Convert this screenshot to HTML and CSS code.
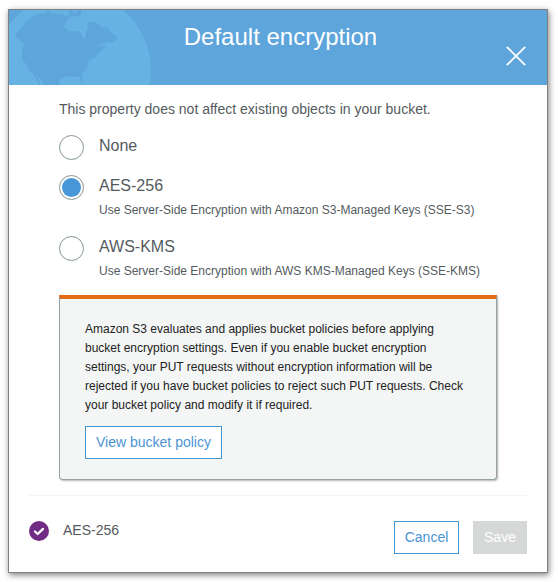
FILE: index.html
```
<!DOCTYPE html>
<html lang="en">
<head>
<meta charset="utf-8">
<title>Default encryption</title>
<link rel="stylesheet" href="styles.css">
</head>
<body>
<section class="modal">
  <header class="header">
    <svg class="globe" width="144" height="75" viewBox="9 10 144 75" aria-hidden="true">
      <circle cx="73" cy="70" r="78" fill="#65b2e3"/>
      <path fill="#5ea5db" d="M40 13 L32 17 L25 23 L20 29 L15 35 L17 38 L22 42 L25 45 L24 47 L22 46 L22 59 L26 64 L29 71 L34 75 L39 85 L40.500 85 L36 74 L41 80 L44 85 L59 85 L60 79 L68 76 L73 77 L80 77 L82 83 L83 83 L83 78 L81 74 L87 69 L89 60 L96 57 L98 53 L102 50 L105 48 L105 45 L98 47 L101 43 L109 42 L111 43 L117 39 L115 35 L110 32 L107 27 L101 28 L97 23 L92 22 L87 22 L88 29 L86 31 L86 36 L84 40 L82 37 L81 33 L77 31 L68 31 L64 27 L66 21 L71 17 L78 16 L81 15 L81 10 L78 10 L75 13 L72 10 L67 11 L71 14 L66 16 L62 15 L61 12 L60 15 L55 13 L51 14 L50 11 L46 12 L44 14Z"/>
    </svg>
    <h1>Default encryption</h1>
    <svg class="close" width="20" height="20" viewBox="0 0 20 20" aria-label="Close"><path d="M.8.8 19.2 19.2M19.2.8.8 19.2" fill="none" stroke="#fff" stroke-width="1.8"/></svg>
  </header>
  <main class="body">
    <p class="intro">This property does not affect existing objects in your bucket.</p>
    <div class="option"><span class="radio"></span><div><div class="name">None</div></div></div>
    <div class="option detailed"><span class="radio checked"></span><div><div class="name">AES-256</div><div class="desc">Use Server-Side Encryption with Amazon S3-Managed Keys (SSE-S3)</div></div></div>
    <div class="option detailed"><span class="radio"></span><div><div class="name">AWS-KMS</div><div class="desc">Use Server-Side Encryption with AWS KMS-Managed Keys (SSE-KMS)</div></div></div>
    <div class="notice">
      <p>Amazon S3 evaluates and applies bucket policies before applying<br>bucket encryption settings. Even if you enable bucket encryption<br>settings, your PUT requests without encryption information will be<br>rejected if you have bucket policies to reject such PUT requests. Check<br>your bucket policy and modify it if required.</p>
      <button class="btn view">View bucket policy</button>
    </div>
  </main>
  <footer class="footer">
    <svg class="status" width="20" height="20" viewBox="0 0 20 20" aria-hidden="true"><circle cx="10" cy="10" r="10" fill="#702b84"/><path d="M6 10.500 8.700 13 14 7.900" fill="none" stroke="#fff" stroke-width="2.300" stroke-linecap="round" stroke-linejoin="round"/></svg>
    <span class="current">AES-256</span>
    <button class="btn cancel">Cancel</button>
    <button class="btn save" disabled>Save</button>
  </footer>
</section>
</body>
</html>
```
FILE: styles.css
```
* { box-sizing: border-box; }
body {
  margin: 0;
  padding: 9px 10px 9px 8px;
  background: #fff;
  font-family: "Liberation Sans", Arial, sans-serif;
  color: #545b5e;
}
.modal {
  width: 540px;
  height: 564px;
  border: 1px solid #808080;
  background: #fff;
  box-shadow: 1px 2px 6px rgba(0, 0, 0, .5);
}
.header {
  position: relative;
  height: 75px;
  background: #5ea5db;
  overflow: hidden;
}
.globe { position: absolute; left: 0; top: 0; }
h1 {
  position: relative;
  margin: 0;
  padding-top: 13px;
  padding-left: 5px;
  font-size: 24px;
  line-height: 28px;
  font-weight: 400;
  text-align: center;
  color: #fff;
}
.close { position: absolute; top: 36px; left: 497px; }
.body { padding: 14px 50px 0; }
.intro { margin: 0 0 16px; font-size: 14px; line-height: 20px; }
.option { display: flex; gap: 15px; height: 40px; }
.option.detailed { height: 61px; }
.radio {
  flex: none;
  width: 25px;
  height: 25px;
  padding: 2px;
  border: 1px solid #879596;
  border-radius: 50%;
  background: #fff;
}
.radio.checked::before {
  content: "";
  display: block;
  width: 19px;
  height: 19px;
  border-radius: 50%;
  background: #4696d8;
}
.name { padding-top: 1px; font-size: 16px; line-height: 20px; }
.desc { margin-top: 6px; font-size: 12px; line-height: 16px; white-space: nowrap; }
.notice {
  width: 438px;
  height: 185px;
  margin-top: -2px;
  padding: 21px 25px 0;
  border: 1px solid #95a0a2;
  border-top: 4px solid #e26d16;
  border-radius: 0 0 4px 4px;
  background: #f4f6f6;
  box-shadow: 1px 1px 2px rgba(0, 0, 0, .3);
}
.notice p { margin: 0 0 11px; font-size: 12px; line-height: 19px; color: #222; white-space: nowrap; }
.btn {
  height: 33px;
  padding: 0;
  border: 1px solid #4695d3;
  border-radius: 0;
  background: #fff;
  color: #4b94d4;
  font: 14px/31px "Liberation Sans", Arial, sans-serif;
}
.view { display: block; width: 137px; }
.footer {
  display: flex;
  align-items: flex-start;
  margin: 15px 20px 0;
  padding-top: 25px;
  border-top: 1px solid #f2f3f3;
}
.current { margin-left: 14px; font-size: 14px; line-height: 18px; }
.cancel { width: 65px; margin-left: auto; }
.save { width: 54px; margin-left: 14px; border-color: #d5d8d7; background: #d5d8d7; color: #fff; }
```
